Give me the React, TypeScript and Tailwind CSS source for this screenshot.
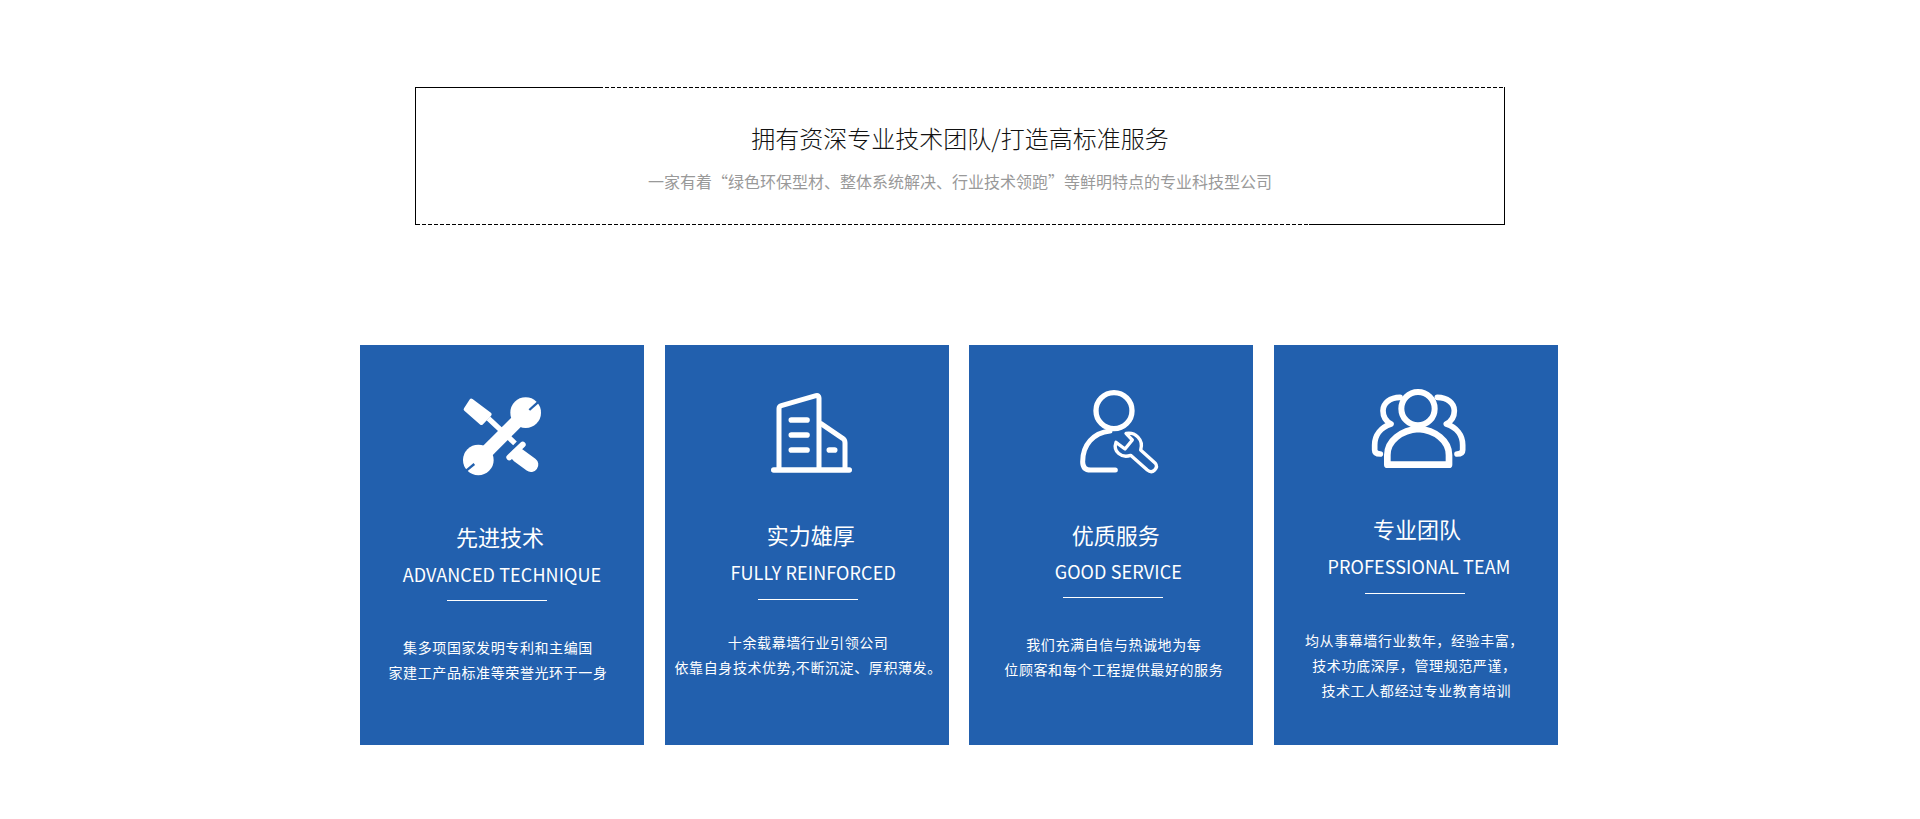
const IconTools = () => (
  <svg viewBox="0 0 360 300" className="w-[120px] h-[100px]" fill="none" stroke="#fff" strokeLinecap="round" strokeLinejoin="round">
    {/* screwdriver */}
    <path d="M94 62 L149 103 L124 129 L77 88 Z" fill="#fff" strokeWidth="12" />
    <path d="M145 115 L225 190" strokeWidth="16" strokeLinecap="butt" />
    <path d="M208 232 L248 194" strokeWidth="18" />
    <path d="M235 226 L273 254" strokeWidth="44" />
    {/* wrench */}
    <circle cx="257" cy="98" r="46" fill="#fff" stroke="none" />
    <circle cx="115" cy="240" r="46" fill="#fff" stroke="none" />
    <path d="M242 113 L130 225" strokeWidth="40" strokeLinecap="butt" />
    <path d="M296 65 L268 90" stroke="#2260ae" strokeWidth="7" strokeLinecap="butt" />
    <path d="M76 274 L103 252" stroke="#2260ae" strokeWidth="7" strokeLinecap="butt" />
  </svg>
);

const IconBuilding = () => (
  <svg viewBox="0 0 360 300" className="w-[120px] h-[100px]" fill="none" stroke="#fff" strokeLinecap="round" strokeLinejoin="round">
    <path d="M87 265 V86 Q87 79 94 77 L198 47 Q207 45 207 54 V265" strokeWidth="15" />
    <path d="M213 131 L278 175 Q285 180 285 188 V265" strokeWidth="15" />
    <path d="M71 270 H298" strokeWidth="16" />
    <path d="M124 120 H171 M124 165 H171 M124 210 H171" strokeWidth="17" />
    <path d="M238 210 H254" strokeWidth="17" />
  </svg>
);

const IconPerson = () => (
  <svg viewBox="0 0 360 300" className="w-[120px] h-[100px]" fill="none" stroke="#fff" strokeLinecap="round" strokeLinejoin="round">
    <circle cx="162" cy="92" r="54" strokeWidth="16" />
    <path d="M150 153 C100 158 68 195 68 245 Q68 270 92 270 H166" strokeWidth="15" />
    <path d="M198 160 C225 155 252 178 242 210 L286 250 Q294 260 284 270 Q274 280 262 270 L212 226 C185 236 158 215 168 187 L195 207 L217 180 Z" strokeWidth="10" />
  </svg>
);

const IconTeam = () => (
  <svg viewBox="0 0 360 300" className="w-[120px] h-[100px]" fill="none" stroke="#fff" strokeLinecap="round" strokeLinejoin="round">
    <path d="M135 52 C105 52 84 70 84 92 C84 112 94 124 108 132 C78 142 59 165 59 195 V210 Q59 222 76 222" strokeWidth="17" />
    <path d="M247 52 C277 52 298 70 298 92 C298 112 288 124 274 132 C304 142 323 165 323 195 V210 Q323 222 306 222" strokeWidth="17" />
    <circle cx="189" cy="86" r="50" strokeWidth="18" />
    <path d="M97 254 V225 C97 182 140 150 190 147 C240 150 282 182 282 225 V254 Z" strokeWidth="20" />
  </svg>
);

const cards = [
  {
    icon: <IconTools />,
    iconClass: "mt-[35px] ml-[-4px]",
    zh: "先进技术",
    zhClass: "mt-[40px] ml-[-4px]",
    en: "ADVANCED TECHNIQUE",
    enClass: "mt-[8px]",
    lineClass: "mt-[12px] ml-[-10px]",
    bodyClass: "mt-[34px] ml-[-8px]",
    lines: ["集多项国家发明专利和主编国", "家建工产品标准等荣誉光环于一身"],
  },
  {
    icon: <IconBuilding />,
    iconClass: "mt-[35px] ml-[6px]",
    zh: "实力雄厚",
    zhClass: "mt-[38px] ml-[8px]",
    en: "FULLY REINFORCED",
    enClass: "mt-[8px] ml-[13px]",
    lineClass: "mt-[13px] ml-[3px]",
    bodyClass: "mt-[30px] ml-[3px]",
    lines: ["十余载幕墙行业引领公司", "依靠自身技术优势,不断沉淀、厚积薄发。"],
  },
  {
    icon: <IconPerson />,
    iconClass: "mt-[35px] ml-[18px]",
    zh: "优质服务",
    zhClass: "mt-[38px] ml-[9px]",
    en: "GOOD SERVICE",
    enClass: "mt-[7px] ml-[14px]",
    lineClass: "mt-[12px] ml-[4px]",
    bodyClass: "mt-[34px] ml-[5px]",
    lines: ["我们充满自信与热诚地为每", "位顾客和每个工程提供最好的服务"],
  },
  {
    icon: <IconTeam />,
    iconClass: "mt-[35px] ml-[-2px]",
    zh: "专业团队",
    zhClass: "mt-[32px] ml-[2px]",
    en: "PROFESSIONAL TEAM",
    enClass: "mt-[8px] ml-[6px]",
    lineClass: "mt-[13px] ml-[-2px]",
    bodyClass: "mt-[34px] ml-[-3px]",
    lines: ["均从事幕墙行业数年，经验丰富，", "技术功底深厚，管理规范严谨，", "\u00a0技术工人都经过专业教育培训"],
  },
];

const dashed = "h-px flex-1 bg-[repeating-linear-gradient(90deg,#000_0,#000_4px,transparent_4px,transparent_6px)]";

export default function App() {
  return (
    <div className="min-h-[819px] bg-white pt-[87px] font-['Noto_Sans_CJK_SC',sans-serif]">
      {/* heading box */}
      <div className="mx-auto flex h-[138px] w-[1090px] flex-col items-center border-x border-black">
        <div className="flex w-full">
          <span className="h-px w-[183px] bg-black" />
          <span className={dashed} />
        </div>
        <h2 className="mt-[32px] text-[24px] font-light leading-[36px] text-[#111]">
          拥有资深专业技术团队/打造高标准服务
        </h2>
        <p className="mt-[13px] text-[16px] leading-[24px] text-[#999]">
          一家有着“绿色环保型材、整体系统解决、行业技术领跑”等鲜明特点的专业科技型公司
        </p>
        <div className="mt-auto flex w-full">
          <span className={dashed} />
          <span className="h-px w-[195px] bg-black" />
        </div>
      </div>

      {/* cards */}
      <div className="ml-[360px] mt-[120px] flex w-[1198px] justify-between">
        {cards.map((c) => (
          <div key={c.zh} className="flex h-[400px] w-[284px] flex-col items-center bg-[#2260ae] text-white">
            <div className={c.iconClass}>{c.icon}</div>
            <h3 className={`${c.zhClass} text-[22px] leading-[32px]`}>{c.zh}</h3>
            <p className={`${c.enClass} whitespace-nowrap text-[18px] leading-[28px] tracking-[0.1px]`}>{c.en}</p>
            <div className={`${c.lineClass} h-px w-[100px] bg-white`} />
            <div className={`${c.bodyClass} text-center text-[14px] leading-[25px] tracking-[0.6px]`}>
              {c.lines.map((l) => (
                <p key={l} className="whitespace-nowrap">{l}</p>
              ))}
            </div>
          </div>
        ))}
      </div>
    </div>
  );
}
